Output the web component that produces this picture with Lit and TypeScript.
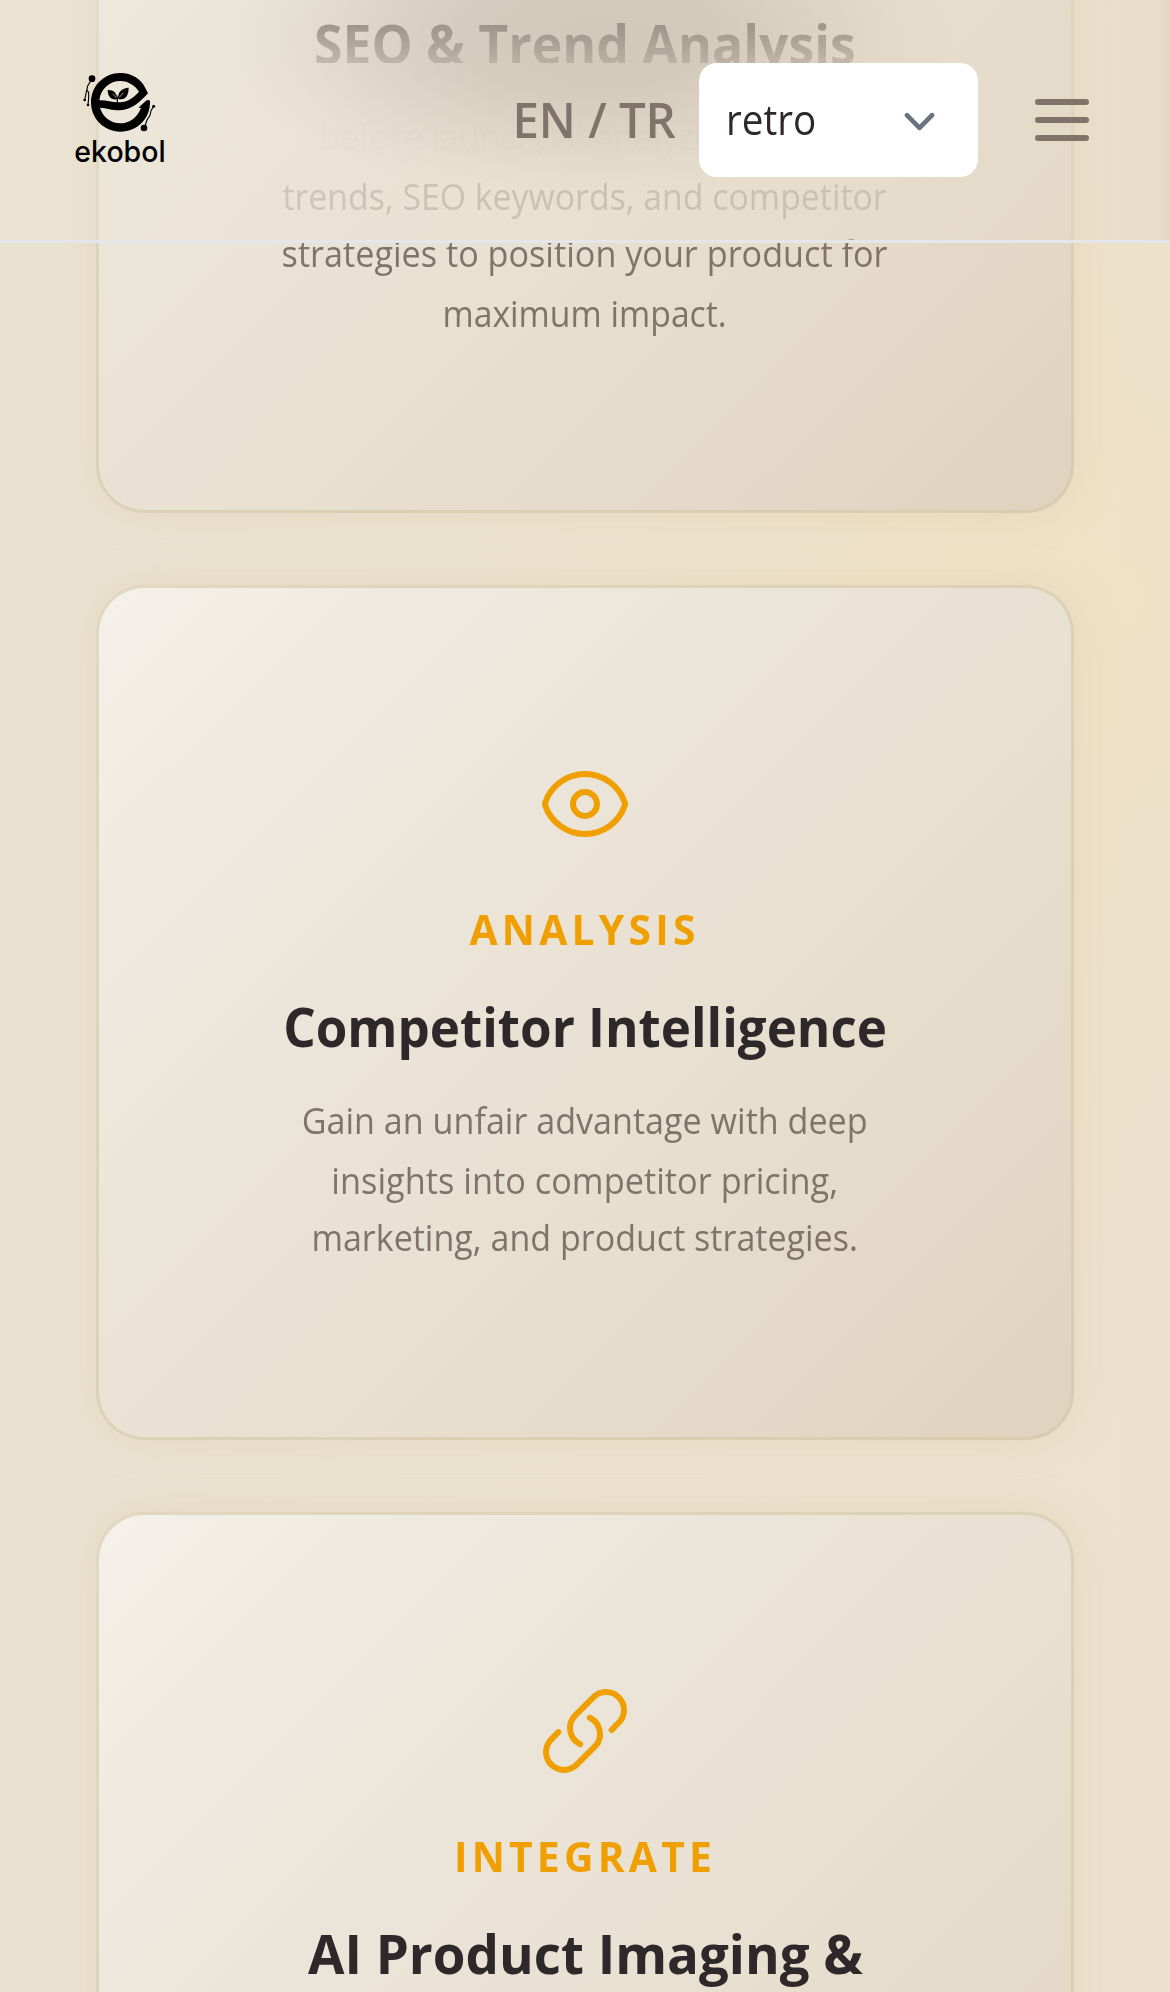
import { LitElement, html, css, svg, nothing, type TemplateResult } from "lit";
import { customElement, property } from "lit/decorators.js";
import { styleMap } from "lit/directives/style-map.js";
import { classMap } from "lit/directives/class-map.js";

interface Line {
  text: string;
  /** Horizontal condensing applied to the line. */
  fit: number;
  tone?: "ghost" | "faint";
}

interface Feature {
  icon: TemplateResult | null;
  tag: string | null;
  title: Line;
  lines: Line[];
  variant?: "first" | "last";
}

const eyeIcon = svg`
  <path d="M2.036 12.322a1.012 1.012 0 010-.639C3.423 7.51 7.36 4.5 12 4.5c4.638 0 8.573 3.007 9.963 7.178.07.207.07.431 0 .639C20.577 16.49 16.64 19.5 12 19.5c-4.638 0-8.573-3.007-9.963-7.178z"/>
  <path d="M15 12a3 3 0 11-6 0 3 3 0 016 0z"/>`;

const linkIcon = svg`
  <path d="M13.19 8.688a4.5 4.5 0 011.242 7.244l-4.5 4.5a4.5 4.5 0 01-6.364-6.364l1.757-1.757m13.35-.622l1.757-1.757a4.5 4.5 0 00-6.364-6.364l-4.5 4.5a4.5 4.5 0 001.242 7.244"/>`;

const features: Feature[] = [
  {
    icon: null,
    tag: null,
    title: { text: "SEO & Trend Analysis", fit: 0.9577 },
    lines: [
      { text: "before launch, AI analyzes market", fit: 0.937, tone: "ghost" },
      { text: "trends, SEO keywords, and competitor", fit: 0.9396, tone: "faint" },
      { text: "strategies to position your product for", fit: 0.9495 },
      { text: "maximum impact.", fit: 0.937 },
    ],
    variant: "first",
  },
  {
    icon: eyeIcon,
    tag: "ANALYSIS",
    title: { text: "Competitor Intelligence", fit: 0.9463 },
    lines: [
      { text: "Gain an unfair advantage with deep", fit: 0.9473 },
      { text: "insights into competitor pricing,", fit: 0.9535 },
      { text: "marketing, and product strategies.", fit: 0.9455 },
    ],
  },
  {
    icon: linkIcon,
    tag: "INTEGRATE",
    title: { text: "AI Product Imaging &", fit: 0.979 },
    lines: [],
    variant: "last",
  },
];

@customElement("feature-card")
class FeatureCard extends LitElement {
  @property({ attribute: false }) feature!: Feature;

  static styles = css`
    :host {
      display: block;
    }
    .card {
      box-sizing: border-box;
      height: 855px;
      padding-top: 168px;
      border: 3px solid rgba(213, 198, 165, 0.62);
      border-radius: 48px;
      display: flex;
      flex-direction: column;
      align-items: center;
      background: linear-gradient(135deg, #f5f1ea 0%, #f0ebe2 15%, #ebe4d8 37%, #e8e0d1 57%, #e4d9c8 80%, #dfd2be 100%) border-box;
      box-shadow: 0 0 42px rgba(212, 186, 145, 0.28);
      white-space: nowrap;
    }
    .first {
      height: 912px;
    }
    .icon {
      display: block;
      width: 96px;
      height: 96px;
      fill: none;
      stroke: #f09f00;
      stroke-width: 1.5;
      stroke-linecap: round;
      stroke-linejoin: round;
    }
    .tag {
      margin-top: 45px;
      font-size: 42px;
      line-height: 63px;
      font-weight: 700;
      letter-spacing: 4.35px;
      color: #f09f00;
      transform: scaleX(0.971);
    }
    .title {
      margin-top: 26px;
      font-size: 54px;
      line-height: 81px;
      font-weight: 700;
      color: #2e282a;
    }
    .first .title {
      margin-top: 231px;
      color: transparent;
      background: linear-gradient(180deg, #6f655f 17px, #b5aa9e 60px, transparent 60px);
      -webkit-background-clip: text;
      background-clip: text;
    }
    .text {
      margin-top: 25px;
      font-size: 36px;
      line-height: 58.5px;
      color: #80746a;
      text-align: center;
    }
    .first .text {
      margin-top: 24px;
    }
    .line {
      height: 60px;
    }
    .line:nth-child(even) {
      height: 57px;
    }
    .ghost {
      color: rgba(128, 116, 106, 0.04);
    }
    .faint {
      color: rgba(128, 116, 106, 0.42);
    }
  `;

  render() {
    const f = this.feature;
    const fit = (l: Line) => styleMap({ transform: `scaleX(${l.fit})` });
    return html`
      <article class=${classMap({ card: true, first: f.variant === "first" })}>
        ${f.icon ? html`<svg class="icon" viewBox="0 0 24 24">${f.icon}</svg>` : nothing}
        ${f.tag ? html`<div class="tag">${f.tag}</div>` : nothing}
        <div class="title" style=${fit(f.title)}>${f.title.text}</div>
        ${f.lines.length
          ? html`<div class="text">
              ${f.lines.map(
                (l) => html`<div
                  class=${classMap({ line: true, ghost: l.tone === "ghost", faint: l.tone === "faint" })}
                  style=${fit(l)}
                >${l.text}</div>`
              )}
            </div>`
          : nothing}
      </article>
    `;
  }
}

@customElement("brand-logo")
class BrandLogo extends LitElement {
  static styles = css`
    :host {
      display: block;
      width: 120px;
      height: 120px;
    }
    .mark {
      display: block;
      width: 120px;
      height: 120px;
    }
    .name {
      font: 500 88px Inter, sans-serif;
    }
    .wire {
      fill: none;
      stroke: #000;
      stroke-width: 3.4;
    }
    .vein {
      fill: none;
      stroke: #ece6da;
      stroke-width: 2;
    }
  `;

  render() {
    return html`
      <svg class="mark" viewBox="0 0 360 360">
        <path
          fill-rule="evenodd"
          d="M181 39C215 39 245 57 257 86L264 100C245 121 215 151 180 151C155 151 140 144 120 143C128 170 152 190 181 190C208 190 233 172 243 143L235 143L258 122Q266 117 270 123C272 174 233 215 181 215C132 215 93 176 93 127C93 78 132 39 181 39ZM118 121C122 85 150 63 181 63C206 63 226 78 237 95C220 113 203 126 180 127C155 128 140 120 118 121Z"
        />
        <path d="M143 90C160 89 171 98 170 118C152 120 143 108 143 90Z" />
        <path d="M206 83C186 84 171 96 176 117C197 122 206 104 206 83Z" />
        <path class="wire" d="M172 130C172 116 172 112 170 106M172 120C173 112 177 108 182 104" />
        <path class="vein" d="M168 112L158 102M178 112L190 98" />
        <circle cx="96" cy="56" r="10" />
        <circle cx="74" cy="120" r="4" />
        <circle cx="84" cy="135" r="4" />
        <path class="wire" d="M92 63L83 78L80 92L74 120M81 90L86 97V114L84 135" />
        <circle cx="252" cy="204" r="10" />
        <circle cx="281" cy="139" r="4.5" />
        <path class="wire" d="M255 198L261 180L270 166L273 152L280 140" />
        <text class="name" x="43" y="305" textLength="274" lengthAdjust="spacingAndGlyphs">ekobol</text>
      </svg>
    `;
  }
}

@customElement("app-root")
class AppRoot extends LitElement {
  static styles = css`
    :host {
      display: block;
      position: relative;
      height: 1992px;
      overflow: hidden;
      font-family: "Open Sans", "Noto Sans", sans-serif;
      background:
        radial-gradient(ellipse 660px 720px at 1110px 600px, rgba(241, 226, 194, 0.6), rgba(241, 226, 194, 0) 100%),
        linear-gradient(90deg, #eae2d1 0%, #ece3d0 45%, #ede2ce 92%, #ebe1ce 100%);
    }
    .cards {
      display: flex;
      flex-direction: column;
      gap: 72px;
      margin: -399px 96px 0;
    }
    .nav {
      position: absolute;
      top: 0;
      left: 0;
      right: 0;
      height: 243px;
      box-sizing: border-box;
      border-bottom: 3px solid #e4e6ea;
      padding: 0 81px 0 60px;
      display: flex;
      align-items: center;
      background:
        linear-gradient(90deg, rgba(205, 190, 160, 0) 1156px, rgba(205, 190, 160, 0.22) 1170px),
        radial-gradient(ellipse 370px 165px at 585px 34px, rgba(165, 153, 140, 0.34) 0%, rgba(165, 153, 140, 0.3) 35%, rgba(165, 153, 140, 0.17) 62%, rgba(165, 153, 140, 0.06) 83%, rgba(165, 153, 140, 0) 100%),
        linear-gradient(90deg, rgba(236, 229, 215, 0.4), rgba(232, 224, 208, 0.3) 50%, rgba(229, 219, 200, 0.45));
      background-clip: padding-box;
    }
    .brand {
      margin-right: auto;
    }
    .language {
      font-size: 48px;
      line-height: 72px;
      font-weight: 550;
      color: #80746a;
      margin: 0 23px 0 0;
      transform: scaleX(0.985);
      transform-origin: right;
    }
    .select {
      box-sizing: border-box;
      width: 279px;
      height: 114px;
      padding: 0 27px;
      border-radius: 18px;
      background: #fff;
      color: #2e282a;
      font-size: 42px;
      line-height: 63px;
      display: flex;
      align-items: center;
      justify-content: space-between;
    }
    .value {
      transform: scaleX(0.92);
      transform-origin: left;
      margin-top: -3px;
    }
    .chevron {
      width: 63px;
      height: 63px;
      margin: 2px 0 0;
      fill: none;
      stroke: #6b7280;
      stroke-width: 1.5;
      stroke-linecap: round;
      stroke-linejoin: round;
    }
    .menu {
      width: 54px;
      margin-left: 57px;
      display: flex;
      flex-direction: column;
      gap: 12px;
    }
    .bar {
      height: 6px;
      border-radius: 3px;
      background: #80746a;
    }
  `;

  render() {
    return html`
      <main class="cards">
        ${features.map((f) => html`<feature-card .feature=${f}></feature-card>`)}
      </main>
      <nav class="nav">
        <brand-logo class="brand"></brand-logo>
        <div class="language">EN / TR</div>
        <div class="select">
          <span class="value">retro</span>
          <svg class="chevron" viewBox="0 0 20 20"><path d="M6 8l4 4 4-4" /></svg>
        </div>
        <div class="menu">
          <div class="bar"></div>
          <div class="bar"></div>
          <div class="bar"></div>
        </div>
      </nav>
    `;
  }
}
